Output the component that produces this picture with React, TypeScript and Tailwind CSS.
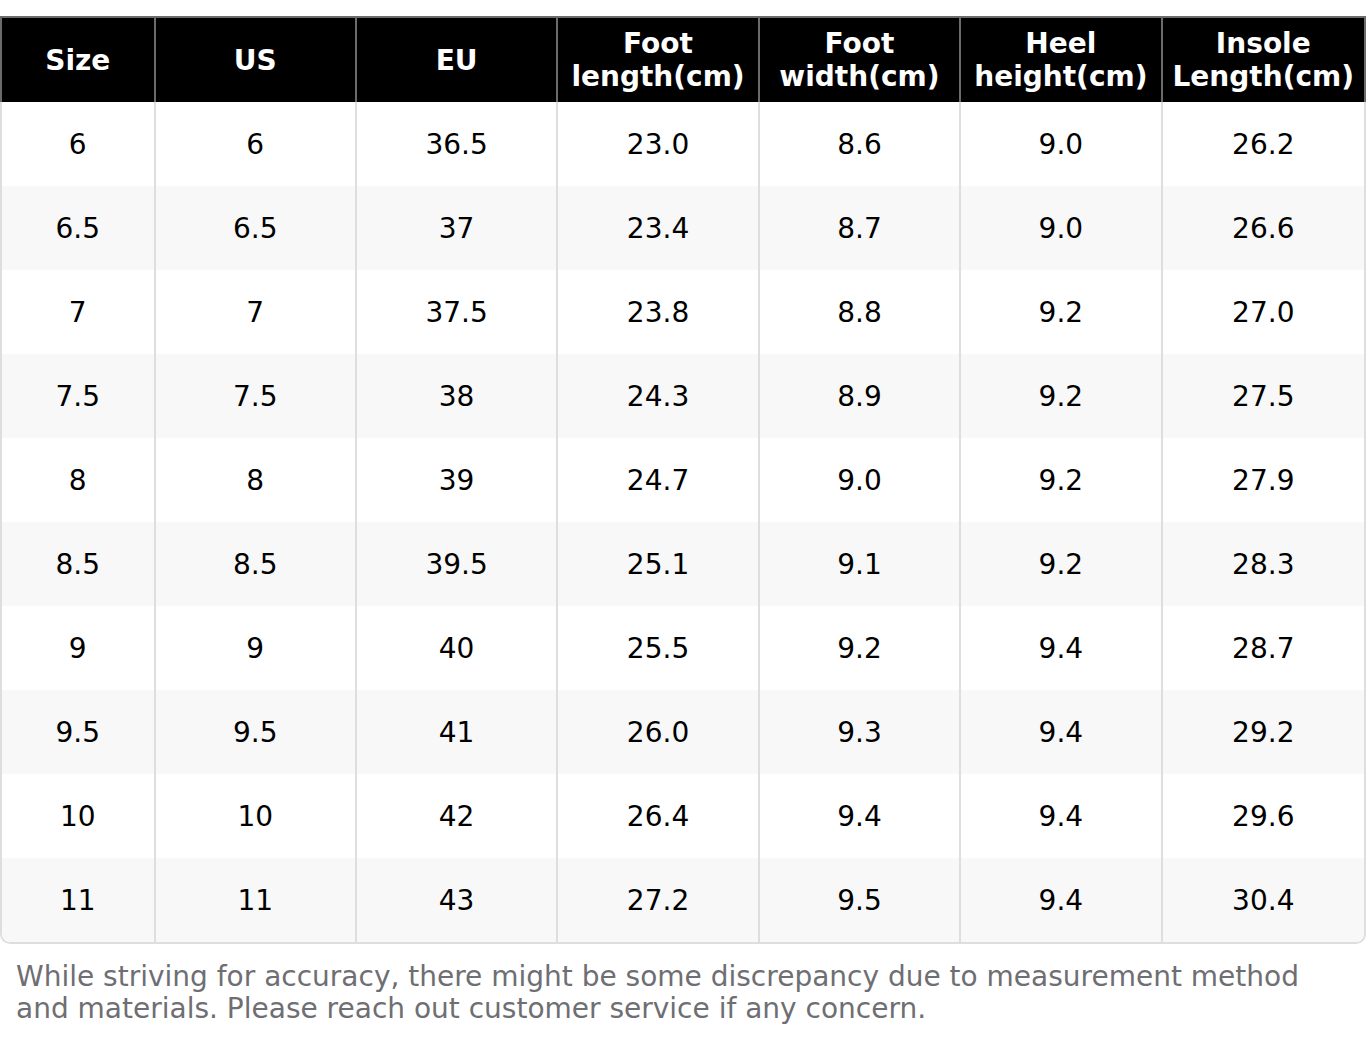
import React from "react";

const HEADERS = [
  "Size",
  "US",
  "EU",
  "Foot length(cm)",
  "Foot width(cm)",
  "Heel height(cm)",
  "Insole Length(cm)",
];

const ROWS: string[][] = [
  ["6", "6", "36.5", "23.0", "8.6", "9.0", "26.2"],
  ["6.5", "6.5", "37", "23.4", "8.7", "9.0", "26.6"],
  ["7", "7", "37.5", "23.8", "8.8", "9.2", "27.0"],
  ["7.5", "7.5", "38", "24.3", "8.9", "9.2", "27.5"],
  ["8", "8", "39", "24.7", "9.0", "9.2", "27.9"],
  ["8.5", "8.5", "39.5", "25.1", "9.1", "9.2", "28.3"],
  ["9", "9", "40", "25.5", "9.2", "9.4", "28.7"],
  ["9.5", "9.5", "41", "26.0", "9.3", "9.4", "29.2"],
  ["10", "10", "42", "26.4", "9.4", "9.4", "29.6"],
  ["11", "11", "43", "27.2", "9.5", "9.4", "30.4"],
];

const SizeChart = () => {
  return (
    <div className="bg-white pt-4 font-['DejaVu_Sans',sans-serif] text-[28px]">
      <div className="grid grid-cols-[153.5px_repeat(6,minmax(0,1fr))] divide-x-2 divide-[#6b6b6b] border-x-2 border-t-2 border-[#6b6b6b] bg-black text-white font-bold">
        {HEADERS.map((h) => (
          <div
            key={h}
            className="h-[84px] flex items-center justify-center text-center leading-[33px]"
          >
            {h.includes(" ") ? (
              <span>
                {h.split(" ")[0]}
                <br />
                {h.split(" ")[1]}
              </span>
            ) : (
              h
            )}
          </div>
        ))}
      </div>
      <div className="border-x-2 border-b-2 border-[#dedede] rounded-b-[10px] overflow-hidden">
        {ROWS.map((row, i) => (
          <div
            key={i}
            className={`grid grid-cols-[153.5px_repeat(6,minmax(0,1fr))] divide-x-2 divide-[#dedede] text-black ${i % 2 === 1 ? "bg-[#f8f8f8]" : "bg-white"}`}
          >
            {row.map((cell, j) => (
              <div
                key={j}
                className="h-[84px] pt-[2px] flex items-center justify-center"
              >
                {cell}
              </div>
            ))}
          </div>
        ))}
      </div>
      <p className="px-4 pt-[17px] leading-[32px] text-[#6e6e73]">
        While striving for accuracy, there might be some discrepancy due to
        measurement method and materials. Please reach out customer service if
        any concern.
      </p>
    </div>
  );
};

export default function App() {
  return <SizeChart />;
}
